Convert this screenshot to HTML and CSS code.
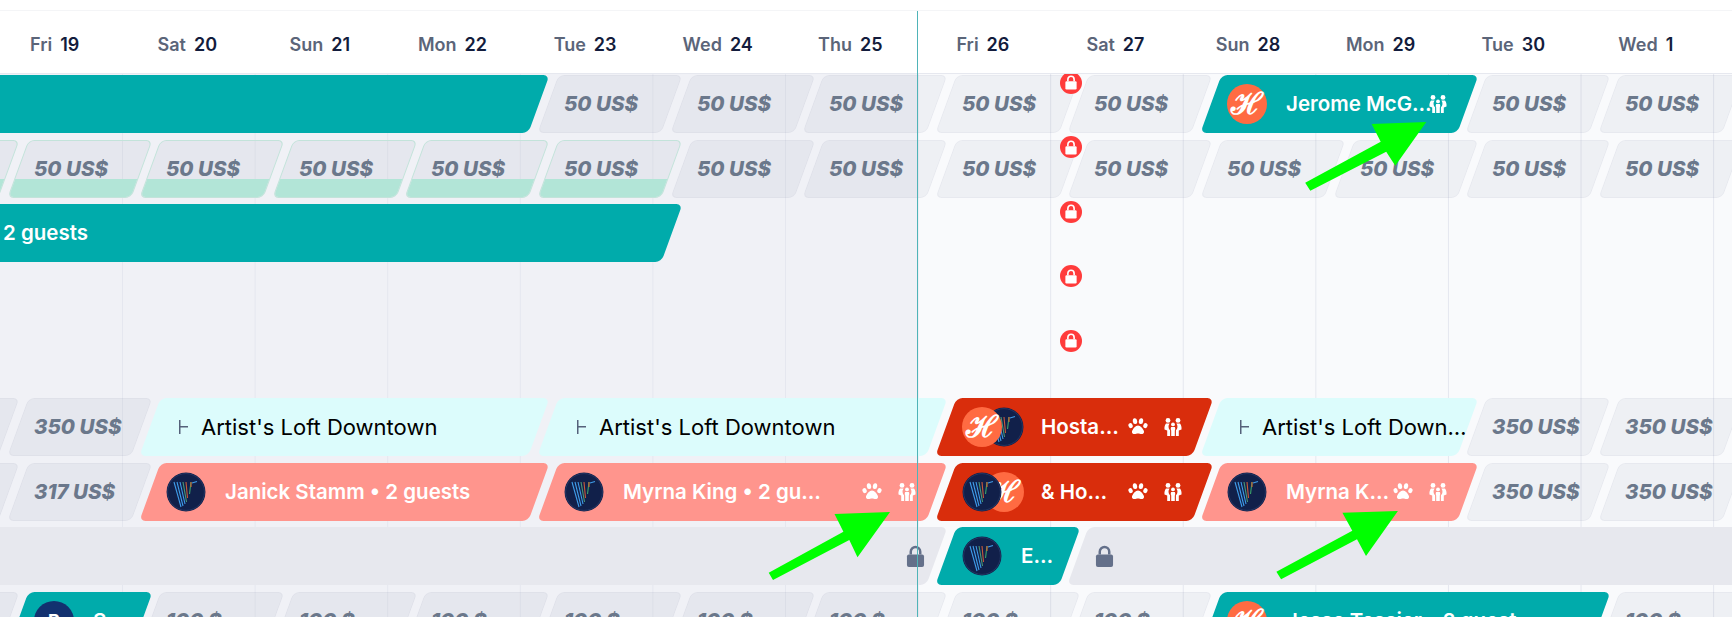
FILE: index.html
```html
<!DOCTYPE html>
<html lang="en">
<head>
  <meta charset="UTF-8" />
  <title>Multi calendar</title>
  <link rel="stylesheet" href="styles.css">
</head>
<body>
<svg width="0" height="0" class="defs">
  <symbol id="paw" viewBox="0 0 20 20">
    <ellipse cx="2.6" cy="8.6" rx="2.1" ry="2.6" transform="rotate(-20 2.6 8.6)"/>
    <ellipse cx="7" cy="4.2" rx="2.2" ry="2.9" transform="rotate(-8 7 4.2)"/>
    <ellipse cx="13" cy="4.2" rx="2.2" ry="2.9" transform="rotate(8 13 4.2)"/>
    <ellipse cx="17.4" cy="8.6" rx="2.1" ry="2.6" transform="rotate(20 17.4 8.6)"/>
    <path d="M10 8.6c2.6 0 4 2.4 5.4 4.3 1.3 1.8.6 4.2-1.8 4.2-1.4 0-2.3-.6-3.6-.6s-2.2.6-3.6.6c-2.4 0-3.1-2.4-1.8-4.2C6 11 7.4 8.6 10 8.6z"/>
  </symbol>
  <symbol id="people" viewBox="0 0 20 20">
    <circle cx="5" cy="3.4" r="2.4"/>
    <circle cx="15" cy="3.4" r="2.4"/>
    <circle cx="10" cy="7.4" r="1.9"/>
    <path d="M3 6.4h3.6c-.8 1.2-1.2 2.4-1 3.8.1 1.3.8 2.3 1.5 3V19H4.2v-5.6L1.5 12.5c-.3-2.5.3-4.6 1.5-6.1z"/>
    <path d="M17 6.4h-3.6c.8 1.2 1.2 2.4 1 3.8-.1 1.3-.8 2.3-1.5 3V19h2.9v-5.6l2.7-.9c.3-2.5-.3-4.6-1.5-6.1z"/>
    <path d="M8.2 10h3.6c.6 1.1.6 2.4 0 3.5V19H8.2v-5.5c-.6-1.1-.6-2.4 0-3.5z"/>
  </symbol>
  <symbol id="padlock" viewBox="0 0 20 24">
    <path d="M5 10V7a5 5 0 0 1 10 0v3" fill="none" stroke="currentColor" stroke-width="2.6"/>
    <rect x="1" y="10" width="18" height="13" rx="2" fill="currentColor"/>
  </symbol>
  <symbol id="vlogo" viewBox="0 0 40 40">
    <circle cx="20" cy="20" r="19.5" fill="#11204a"/>
    <circle cx="20" cy="20" r="18.4" fill="none" stroke="#2c3f6e" stroke-width=".7"/>
    <g fill="none" stroke-width="1.1">
      <path d="M8 10l7 25M11 10l6 24M14 10l5 22" stroke="#3f9be8"/>
      <path d="M17 10l3.5 20" stroke="#4a9a78"/>
      <path d="M20 10l1.5 16" stroke="#c95a3a"/>
      <path d="M25 10l-1.5 12" stroke="#3aa06a"/>
      <path d="M25 10v5" stroke="#d9672f"/>
      <path d="M26 11l5-1.5" stroke="#3f9be8"/>
    </g>
  </symbol>
</svg>

<div class="days">
  <div class="day"><span>Fri</span><b>19</b></div>
  <div class="day"><span>Sat</span><b>20</b></div>
  <div class="day"><span>Sun</span><b>21</b></div>
  <div class="day"><span>Mon</span><b>22</b></div>
  <div class="day"><span>Tue</span><b>23</b></div>
  <div class="day"><span>Wed</span><b>24</b></div>
  <div class="day"><span>Thu</span><b>25</b></div>
  <div class="day"><span>Fri</span><b>26</b></div>
  <div class="day"><span>Sat</span><b>27</b></div>
  <div class="day"><span>Sun</span><b>28</b></div>
  <div class="day"><span>Mon</span><b>29</b></div>
  <div class="day"><span>Tue</span><b>30</b></div>
  <div class="day"><span>Wed</span><b>1</b></div>
</div>

<div class="board">
  <div class="row">
    <div class="bar teal span-5"></div>
    <div class="cell"><span>50 US$</span></div>
    <div class="cell"><span>50 US$</span></div>
    <div class="cell"><span>50 US$</span></div>
    <div class="cell"><span>50 US$</span></div>
    <div class="cell"><span>50 US$</span></div>
    <div class="bar teal span-2">
      <div class="bar-in">
        <div class="avatar hostaway">ℋ</div>
        <div class="name">Jerome McGlynn • 2 guests</div>
        <svg class="icon"><use href="#people"/></svg>
      </div>
    </div>
    <div class="cell"><span>50 US$</span></div>
    <div class="cell"><span>50 US$</span></div>
    <div class="cell"></div>
    <div class="red-lock"><svg><use href="#padlock"/></svg></div>
  </div>

  <div class="row">
    <div class="cell booked"><span>50 US$</span></div>
    <div class="cell booked"><span>50 US$</span></div>
    <div class="cell booked"><span>50 US$</span></div>
    <div class="cell booked"><span>50 US$</span></div>
    <div class="cell booked"><span>50 US$</span></div>
    <div class="cell booked"><span>50 US$</span></div>
    <div class="cell"><span>50 US$</span></div>
    <div class="cell"><span>50 US$</span></div>
    <div class="cell"><span>50 US$</span></div>
    <div class="cell"><span>50 US$</span></div>
    <div class="cell"><span>50 US$</span></div>
    <div class="cell"><span>50 US$</span></div>
    <div class="cell"><span>50 US$</span></div>
    <div class="cell"><span>50 US$</span></div>
    <div class="cell"></div>
    <div class="red-lock"><svg><use href="#padlock"/></svg></div>
  </div>

  <div class="row">
    <div class="bar teal span-6">
      <div class="bar-in from-offscreen"><div class="name">2 guests</div></div>
    </div>
    <div class="red-lock"><svg><use href="#padlock"/></svg></div>
  </div>

  <div class="row">
    <div class="red-lock"><svg><use href="#padlock"/></svg></div>
  </div>

  <div class="row">
    <div class="red-lock"><svg><use href="#padlock"/></svg></div>
  </div>

  <div class="row">
    <div class="cell"><span>350 US$</span></div>
    <div class="cell"><span>350 US$</span></div>
    <div class="bar listing span-3">
      <div class="bar-in"><i class="tee"></i><div class="name">Artist's Loft Downtown</div></div>
    </div>
    <div class="bar listing span-3">
      <div class="bar-in"><i class="tee"></i><div class="name">Artist's Loft Downtown</div></div>
    </div>
    <div class="bar conflict span-2">
      <div class="bar-in">
        <div class="avatar hostaway front">ℋ</div>
        <svg class="avatar second"><use href="#vlogo"/></svg>
        <div class="name">Hostaway</div>
        <svg class="icon"><use href="#paw"/></svg>
        <svg class="icon"><use href="#people"/></svg>
      </div>
    </div>
    <div class="bar listing span-2">
      <div class="bar-in"><i class="tee"></i><div class="name">Artist's Loft Downtown</div></div>
    </div>
    <div class="cell"><span>350 US$</span></div>
    <div class="cell"><span>350 US$</span></div>
  </div>

  <div class="row">
    <div class="cell"><span>317 US$</span></div>
    <div class="cell"><span>317 US$</span></div>
    <div class="bar salmon span-3">
      <div class="bar-in">
        <svg class="avatar"><use href="#vlogo"/></svg>
        <div class="name">Janick Stamm • 2 guests</div>
      </div>
    </div>
    <div class="bar salmon span-3">
      <div class="bar-in">
        <svg class="avatar"><use href="#vlogo"/></svg>
        <div class="name name-short">Myrna King • 2 guests</div>
        <svg class="icon"><use href="#paw"/></svg>
        <svg class="icon"><use href="#people"/></svg>
      </div>
    </div>
    <div class="bar conflict span-2">
      <div class="bar-in">
        <svg class="avatar front"><use href="#vlogo"/></svg>
        <div class="avatar hostaway second">ℋ</div>
        <div class="name name-tight">&amp; Hostaway</div>
        <svg class="icon"><use href="#paw"/></svg>
        <svg class="icon"><use href="#people"/></svg>
      </div>
    </div>
    <div class="bar salmon span-2">
      <div class="bar-in">
        <svg class="avatar"><use href="#vlogo"/></svg>
        <div class="name">Myrna King • 2 guests</div>
        <svg class="icon"><use href="#paw"/></svg>
        <svg class="icon"><use href="#people"/></svg>
      </div>
    </div>
    <div class="cell"><span>350 US$</span></div>
    <div class="cell"><span>350 US$</span></div>
  </div>

  <div class="row">
    <div class="bar blocked span-8">
      <div class="bar-in lock-right"><svg class="grey-lock"><use href="#padlock"/></svg></div>
    </div>
    <div class="bar teal">
      <div class="bar-in tight">
        <svg class="avatar"><use href="#vlogo"/></svg>
        <div class="name">Edward</div>
      </div>
    </div>
    <div class="bar blocked span-6">
      <div class="bar-in lock-left"><svg class="grey-lock"><use href="#padlock"/></svg></div>
    </div>
  </div>

  <div class="row">
    <div class="cell"><span>100 $</span></div>
    <div class="bar teal">
      <div class="bar-in tight">
        <div class="avatar initial">B</div>
        <div class="name">Sam</div>
      </div>
    </div>
    <div class="cell"><span>100 $</span></div>
    <div class="cell"><span>100 $</span></div>
    <div class="cell"><span>100 $</span></div>
    <div class="cell"><span>100 $</span></div>
    <div class="cell"><span>100 $</span></div>
    <div class="cell"><span>100 $</span></div>
    <div class="cell"><span>100 $</span></div>
    <div class="cell"><span>100 $</span></div>
    <div class="bar teal span-3">
      <div class="bar-in">
        <div class="avatar hostaway">ℋ</div>
        <div class="name">Jesse Tessier • 2 guest</div>
      </div>
    </div>
    <div class="cell"><span>100 $</span></div>
  </div>
</div>

<div class="now-line"></div>

<!-- green arrows drawn on top of the screenshot -->
<svg class="arrows" viewBox="0 0 1732 617">
  <polygon points="1305.2,182.7 1380.7,141.7 1371.6,124 1426.3,122 1395.3,165.7 1386.2,151.7 1310.3,190.7"/>
  <polygon points="768.7,572.7 843.4,531.7 834.5,514 890,512 857.5,557.3 849.3,540 773,580"/>
  <polygon points="1276.4,571.7 1352.3,530.7 1342.4,512.7 1397.9,511 1366,556 1357,539.3 1281.1,579.3"/>
</svg>
</body>
</html>
```

FILE: styles.css
```css
html, body {
  margin: 0;
  padding: 0;
  height: 100%;
  overflow: hidden;
  background: white;
  font-family: Inter, 'Liberation Sans', sans-serif;
}

.defs {
  position: absolute;
}

/* header with the dates */
.days {
  display: grid;
  grid-template-columns: repeat(13, 132.6px);
  align-items: center;
  height: 64px;
  padding-top: 4px;
  box-sizing: border-box;
  margin-top: 10px;
  margin-left: -11.6px;
  border-top: 1px solid #f4f5f7;
  border-bottom: 1px solid #e6e8ef;
  width: 1760px;
  font-size: 18px;
}

.day {
  display: flex;
  justify-content: center;
  gap: 8px;
  color: #5b6579;
  font-weight: 600;
}

.day b {
  color: #131c3c;
  font-weight: 600;
}

/* rows of the calendar */
.board {
  height: 543px;
  overflow: hidden;
  display: flex;
  flex-direction: column;
  gap: 7.1px;
  padding-top: 1px;
  box-sizing: border-box;
  background:
    linear-gradient(90deg, #e5e7ef 1px, transparent 1px) 122px 0 / 132.6px 100%,
    linear-gradient(90deg, #f0f1f6 917.5px, #f9fafc 917.5px);
}

.row {
  position: relative;
  flex: none;
  display: grid;
  grid-template-columns: repeat(15, 124px);
  column-gap: 8.6px;
  height: 57.5px;
  margin-left: -114.9px;
}

.cell, .bar {
  position: relative;
  transform: skewX(-20deg);
  border-radius: 6px;
  overflow: hidden;
  box-sizing: border-box;
}

.cell {
  background: rgba(66, 83, 119, 0.06);
  border: 1px solid rgba(66, 83, 119, 0.04);
}

.cell span {
  position: relative;
  z-index: 1;
  display: block;
  transform: skewX(20deg);
  padding-left: 15px;
  line-height: 55.5px;
  font-size: 20.5px;
  font-weight: 800;
  font-style: italic;
  color: #6b788b;
}

.cell.booked {
  border-color: #c3e3da;
}

.cell.booked::after {
  content: "";
  position: absolute;
  left: -1px;
  right: -1px;
  bottom: -1px;
  height: 19px;
  background: #b2e5d7;
}

.span-2 { grid-column: span 2; }
.span-3 { grid-column: span 3; }
.span-5 { grid-column: span 5; }
.span-6 { grid-column: span 6; }
.span-8 { grid-column: span 8; }

.teal { background: #00abab; }
.salmon { background: #ff958d; }
.conflict { background: #d92d0c; }
.listing { background: #dcfcfc; }
.blocked { background: #e7e8ee; }

.bar-in {
  display: flex;
  align-items: center;
  height: 100%;
  padding: 0 20px 0 16px;
  box-sizing: border-box;
  transform: skewX(20deg);
  color: white;
}

.bar-in.tight {
  padding-right: 8px;
}

.from-offscreen {
  padding-left: 118px;
}

.name {
  flex: 1;
  min-width: 0;
  margin-left: 19px;
  font-size: 20.5px;
  font-weight: 600;
  white-space: nowrap;
  overflow: hidden;
  text-overflow: ellipsis;
}

.from-offscreen .name {
  margin-left: 0;
}

.second + .name {
  margin-left: 17px;
  margin-right: 8px;
}

.second + .name-tight {
  margin-right: 14px;
}

/* this one is cut earlier than the free space */
.name-short {
  flex: none;
  width: 200px;
  margin-right: auto;
}

.icon {
  flex: none;
  width: 20px;
  height: 20px;
  margin-left: 15px;
  fill: white;
}

.name + .icon {
  margin-left: 0;
}

/* a lone icon sits over the end of the name */
.name + .icon:last-child {
  margin-left: -6px;
}

/* avatars */
.avatar {
  flex: none;
  display: block;
  width: 40px;
  height: 40px;
  border-radius: 50%;
}

.hostaway {
  background: #ff6b42;
  color: white;
  text-align: center;
  font-family: 'DejaVu Serif', serif;
  font-size: 30px;
  font-weight: 700;
  line-height: 40px;
}

.initial {
  background: #12316f;
  color: white;
  text-align: center;
  font-size: 18px;
  font-weight: 700;
  line-height: 40px;
}

.front {
  position: relative;
  z-index: 1;
}

.second {
  margin-left: -18px;
}

/* listing name rows */
.listing .bar-in {
  padding: 0 0 0 29px;
  color: black;
}

.listing .name {
  margin-left: 13px;
  font-size: 22px;
  font-weight: 400;
}

.tee {
  flex: none;
  width: 9px;
  height: 14px;
  background:
    linear-gradient(#55617a, #55617a) 0 0 / 1.5px 100% no-repeat,
    linear-gradient(#55617a, #55617a) 0 50% / 100% 1.5px no-repeat;
}

/* locks */
.red-lock {
  position: absolute;
  left: 1174.9px;
  top: -3.4px;
  width: 22px;
  height: 22px;
  border-radius: 50%;
  background: #ff3b3b;
  color: white;
  display: flex;
  align-items: center;
  justify-content: center;
}

.red-lock svg {
  width: 14px;
  height: 15px;
}

.grey-lock {
  width: 19px;
  height: 23px;
  color: #64708a;
  transform: translateY(1px);
}

.lock-right {
  justify-content: flex-end;
  padding-right: 12px;
}

.lock-left {
  padding-left: 17px;
}

/* overlays */
.now-line {
  position: absolute;
  top: 11px;
  bottom: 0;
  left: 917px;
  width: 1px;
  background: #4fb4b8;
  z-index: 5;
}

.arrows {
  position: absolute;
  top: 0;
  left: 0;
  width: 1732px;
  height: 617px;
  z-index: 6;
  fill: #00ff00;
}
```
